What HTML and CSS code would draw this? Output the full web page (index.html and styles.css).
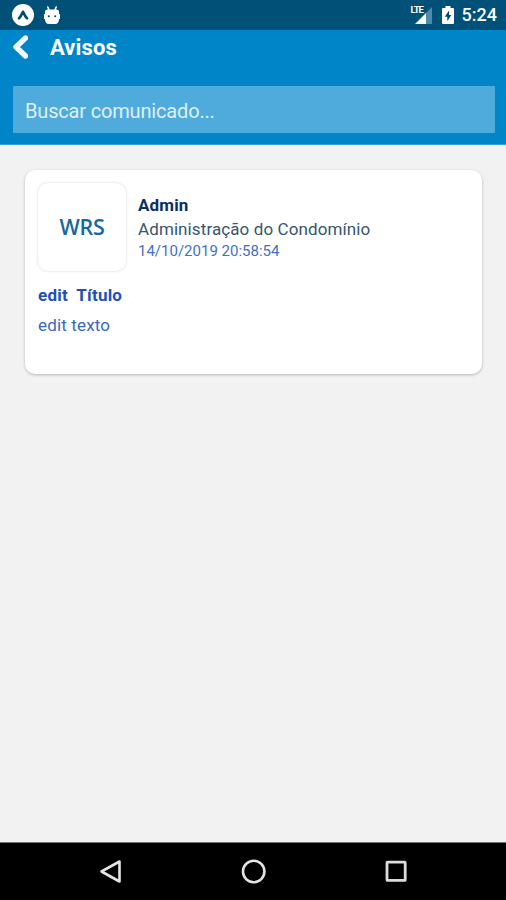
FILE: index.html
```html
<!DOCTYPE html>
<html lang="pt-BR">
<head>
  <meta charset="UTF-8" />
  <meta name="viewport" content="width=device-width, initial-scale=1.0"/>
  <title>Avisos</title>
  <link rel="stylesheet" href="styles.css">
</head>
<body>
  <div class="app">
    <div class="status-bar">
      <div class="status-left">
        <svg width="22" height="22" viewBox="0 0 22 22">
          <circle cx="11" cy="11" r="11" fill="#fff"/>
          <path d="M7 14.4Q8.8 12.6 11 7.8Q13.2 12.6 15 14.4" fill="none" stroke="#00496f" stroke-width="2.6" stroke-linecap="round" stroke-linejoin="round"/>
        </svg>
        <svg width="16" height="19" viewBox="0 0 16 19">
          <path d="M3.8 1L5 4M12.2 1L11 4" stroke="#fff" stroke-width="1.6" stroke-linecap="round"/>
          <path d="M1 6Q1 3.5 3.5 3.5H12.5Q15 3.5 15 6V8H16V13H15Q15 18 11 18H5Q1 18 1 13H0V8H1Z" fill="#fff"/>
          <circle cx="4.8" cy="10.3" r="1" fill="#00496f"/>
          <circle cx="11.2" cy="10.3" r="1" fill="#00496f"/>
        </svg>
      </div>
      <div class="status-right">
        <div class="signal">
          <svg width="19" height="17" viewBox="0 0 19 17">
            <path d="M19 0V17H13V6Z" fill="#4f8aa8"/>
            <path d="M13 6V17H2Z" fill="#fff"/>
          </svg>
          <span class="lte">LTE</span>
        </div>
        <svg class="battery" width="12" height="18" viewBox="0 0 12 18">
          <path d="M3.5 0H8.5V2H11Q12 2 12 3V17Q12 18 11 18H1Q0 18 0 17V3Q0 2 1 2H3.5Z" fill="#fff"/>
          <path d="M7 4.5L2.8 10.8H5.3V15.2L9.3 8.9H7Z" fill="#00496f"/>
        </svg>
        <span class="time">5:24</span>
      </div>
    </div>

    <header class="header">
      <div class="title-row">
        <svg width="16" height="24" viewBox="0 0 16 24">
          <path d="M13.5 3L4 12L13.5 21" fill="none" stroke="#f3f9fd" stroke-width="5.4" stroke-linecap="round" stroke-linejoin="round"/>
        </svg>
        <h1>Avisos</h1>
      </div>
      <input class="search" type="text" placeholder="Buscar comunicado..." />
    </header>

    <main class="content">
      <div class="card">
        <div class="card-top">
          <div class="logo">WRS</div>
          <div class="info">
            <div class="name">Admin</div>
            <div class="role">Administração do Condomínio</div>
            <div class="date">14/10/2019 20:58:54</div>
          </div>
        </div>
        <h2>edit&nbsp; Título</h2>
        <p>edit texto</p>
      </div>
    </main>

    <nav class="nav-bar">
      <svg width="24" height="26" viewBox="0 0 24 26">
        <path d="M20.5 2.5V22.5L2.5 12.5Z" fill="none" stroke="#e4e4e4" stroke-width="2.6" stroke-linejoin="round"/>
      </svg>
      <svg width="26" height="26" viewBox="0 0 26 26">
        <circle cx="12.7" cy="12.5" r="10.7" fill="none" stroke="#e4e4e4" stroke-width="2.6"/>
      </svg>
      <svg width="24" height="26" viewBox="0 0 24 26">
        <rect x="3" y="3.2" width="18.2" height="18.2" rx="0.5" fill="none" stroke="#dcdcdc" stroke-width="2.8"/>
      </svg>
    </nav>
  </div>
</body>
</html>
```
FILE: styles.css
```css
* {
  box-sizing: border-box;
  font-family: Roboto, sans-serif;
}

body {
  margin: 0;
  background: #f2f2f2;
}

svg {
  display: block;
}

.app {
  height: 100vh;
  display: flex;
  flex-direction: column;
}

.status-bar {
  height: 30px;
  padding: 0 9px 0 12px;
  background: #005077;
  display: flex;
  justify-content: space-between;
  align-items: center;
}

.status-left,
.status-right {
  display: flex;
  align-items: center;
}

.status-left {
  gap: 10px;
}

.signal {
  position: relative;
  margin-right: 10px;
}

.lte {
  position: absolute;
  left: -2px;
  top: -2px;
  color: #fff;
  font-size: 9.5px;
  line-height: 10px;
  font-weight: 700;
  letter-spacing: -1px;
}

.time {
  margin-left: 8px;
  color: #fff;
  font-size: 18px;
  font-weight: 500;
  line-height: 32px;
}

.header {
  height: 115px;
  padding: 5px 12px 0;
  background: #0085c8;
  border-bottom: 1px solid #3a9fd4;
}

.title-row {
  display: flex;
  align-items: center;
  gap: 22px;
  height: 24px;
}

h1 {
  margin: 0;
  padding-top: 2px;
  color: #fff;
  font-size: 22px;
  line-height: 24px;
  font-weight: 700;
  letter-spacing: 0.1px;
}

.search {
  display: block;
  width: 482px;
  height: 47px;
  margin: 27px 0 0 0.5px;
  padding: 2px 12.5px 0;
  border: none;
  border-radius: 1px;
  background: #4fabdb;
  color: #fff;
  font-size: 20px;
  letter-spacing: -0.17px;
}

.search::placeholder {
  color: #dff0fa;
  opacity: 1;
}

.content {
  flex: 1;
  padding: 25px 24px 0 25px;
}

.card {
  height: 204px;
  padding: 13px;
  background: #fff;
  border-radius: 10px;
  box-shadow: 0 1px 3px rgba(0,0,0,0.25);
}

.card-top {
  display: flex;
  gap: 12px;
}

.logo {
  width: 88px;
  height: 88px;
  border-radius: 10px;
  box-shadow: 0 0 3px rgba(0,0,0,0.16);
  color: #17699c;
  font-family: "Open Sans", sans-serif;
  font-size: 21.5px;
  font-weight: 600;
  line-height: 88px;
  text-align: center;
  letter-spacing: -0.3px;
}

.info {
  padding-top: 10px;
}

.name {
  color: #08305f;
  font-size: 17px;
  font-weight: 700;
  line-height: 24px;
  letter-spacing: 0.15px;
}

.role {
  color: #36566f;
  font-size: 17px;
  line-height: 24px;
  letter-spacing: 0.1px;
}

.date {
  color: #4270c8;
  font-size: 15px;
  line-height: 20px;
}

h2 {
  margin: 13px 0 0;
  color: #1c50bb;
  font-size: 17px;
  font-weight: 700;
  line-height: 22px;
  letter-spacing: 0.22px;
}

p {
  margin: 8px 0 0;
  color: #3969ba;
  font-size: 17px;
  line-height: 22px;
  letter-spacing: 0.15px;
}

.nav-bar {
  height: 58px;
  padding: 0 98px 0 99px;
  background: #000;
  border-top: 1px solid #777;
  display: flex;
  justify-content: space-between;
  align-items: center;
}
```
